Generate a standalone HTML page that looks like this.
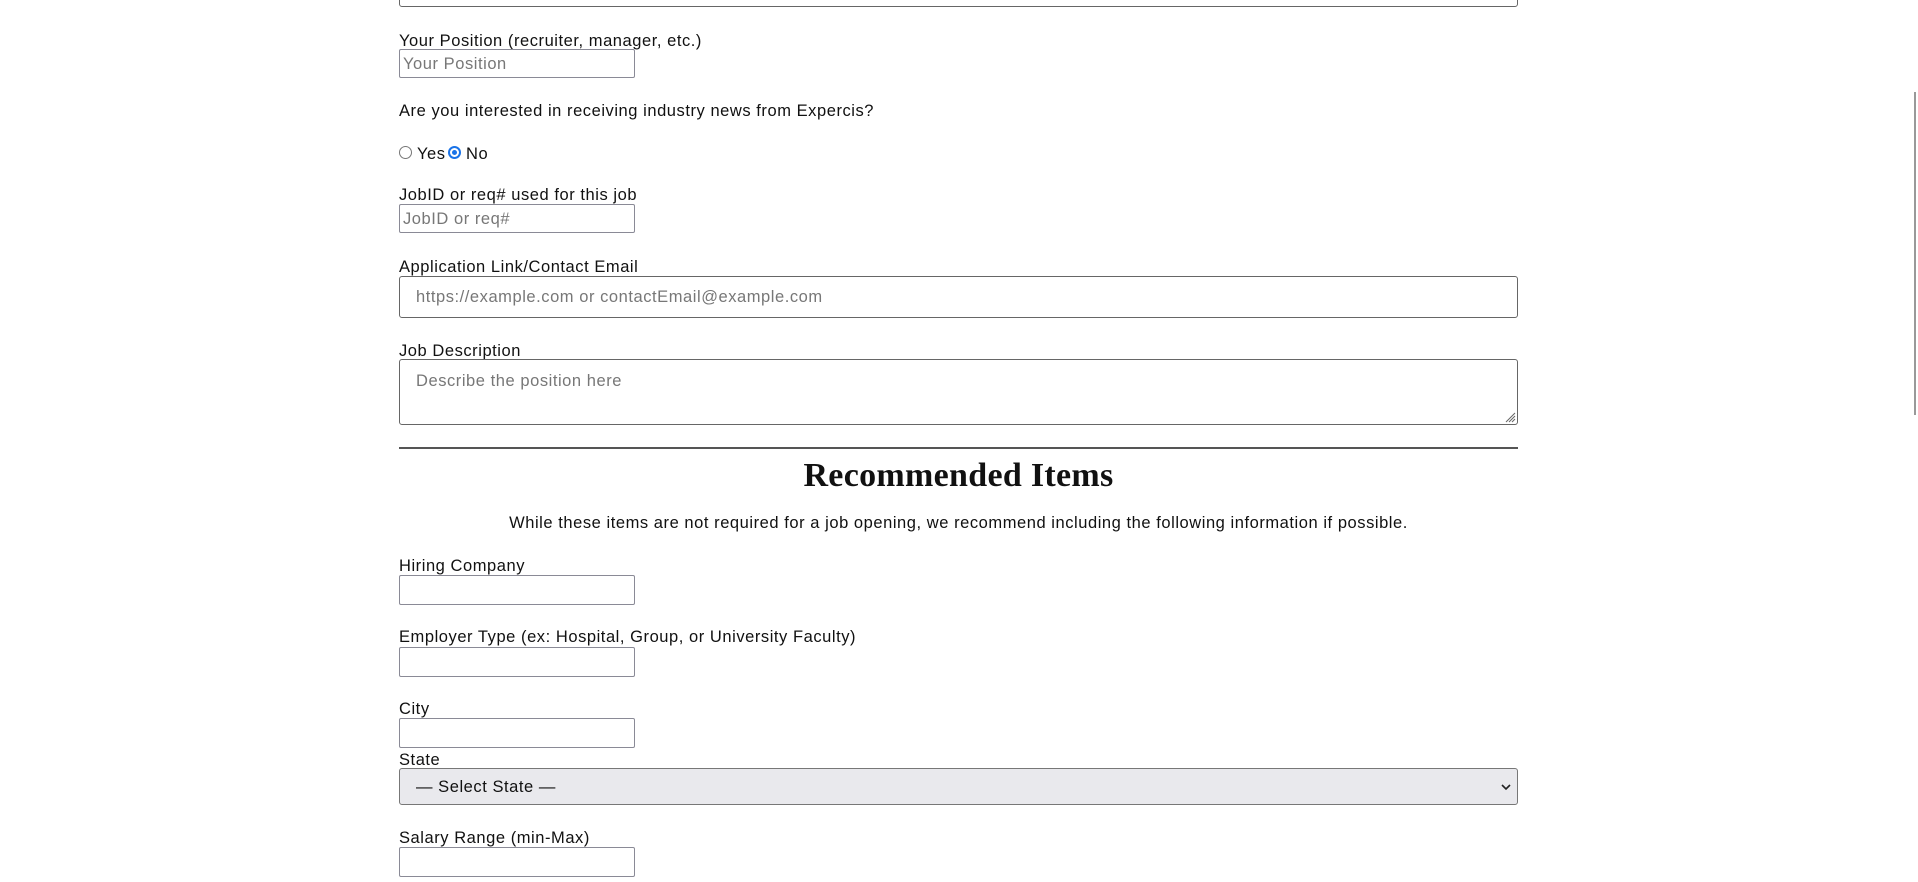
<!DOCTYPE html>
<html><head><meta charset="utf-8"><style>
body{margin:0;width:1918px;height:882px;overflow:hidden;background:#fff;font-family:"Liberation Sans",sans-serif;color:#111;position:relative;letter-spacing:0.55px}
.a{position:absolute}
.l{position:absolute;left:399px;font-size:16.5px;line-height:18px;white-space:nowrap}
.i{position:absolute;left:399px;width:234px;height:28px;border:1px solid #8a8a96;border-radius:2px;box-sizing:content-box}
.w{position:absolute;left:399px;width:1119px;border:1px solid #666;border-radius:3px;box-sizing:border-box}
.ph{color:#777;font-size:16.5px;position:absolute;white-space:nowrap}
</style></head><body>
<div class="w" style="top:-10px;height:17px"></div>
<div class="l" style="top:32px">Your Position (recruiter, manager, etc.)</div>
<div class="i" style="top:49px;height:27px"><span class="ph" style="left:3px;top:5px">Your Position</span></div>
<div class="l" style="top:102px">Are you interested in receiving industry news from Expercis?</div>
<div class="a" style="left:399px;top:146px;width:11px;height:11px;border:1px solid #777;border-radius:50%"></div>
<div class="l" style="left:417px;top:145px">Yes</div>
<div class="a" style="left:448px;top:146px;width:9px;height:9px;border:2px solid #1a73e8;border-radius:50%"><div style="margin:2px;width:5px;height:5px;background:#1a73e8;border-radius:50%"></div></div>
<div class="l" style="left:466px;top:145px">No</div>
<div class="l" style="top:186px">JobID or req# used for this job</div>
<div class="i" style="top:204px;height:27px"><span class="ph" style="left:3px;top:5px">JobID or req#</span></div>
<div class="l" style="top:258px">Application Link/Contact Email</div>
<div class="w" style="top:276px;height:42px"><span class="ph" style="left:16px;top:11px">https://example.com or contactEmail@example.com</span></div>
<div class="l" style="top:342px">Job Description</div>
<div class="w" style="top:359px;height:66px"><span class="ph" style="left:16px;top:12px">Describe the position here</span>
<svg class="a" style="right:1px;bottom:1px" width="12" height="12"><path d="M11 2L2 11M11 5L5 11M11 8L8 11" stroke="#666" stroke-width="1"/></svg></div>
<div class="a" style="left:399px;top:447px;width:1119px;height:2px;background:#555"></div>
<div class="a" style="left:399px;width:1119px;top:456px;text-align:center;font-family:'Liberation Serif',serif;font-weight:bold;font-size:34px;line-height:40px;letter-spacing:0.3px">Recommended Items</div>
<div class="a" style="left:399px;width:1119px;top:514px;text-align:center;font-size:16.5px;line-height:18px">While these items are not required for a job opening, we recommend including the following information if possible.</div>
<div class="l" style="top:557px">Hiring Company</div>
<div class="i" style="top:575px"></div>
<div class="l" style="top:628px">Employer Type (ex: Hospital, Group, or University Faculty)</div>
<div class="i" style="top:647px"></div>
<div class="l" style="top:700px">City</div>
<div class="i" style="top:718px"></div>
<div class="l" style="top:751px">State</div>
<div class="w" style="top:768px;height:37px;background:#e9e9ed;border-color:#777"><span class="a" style="left:16px;top:9px;font-size:16.5px">— Select State —</span>
<svg class="a" style="right:6px;top:14px" width="10" height="8"><path d="M1 2L5 6L9 2" stroke="#222" stroke-width="1.6" fill="none"/></svg></div>
<div class="l" style="top:829px">Salary Range (min-Max)</div>
<div class="i" style="top:847px"></div>
<div class="a" style="left:1914px;top:92px;width:2px;height:323px;background:#999"></div>
</body></html>
